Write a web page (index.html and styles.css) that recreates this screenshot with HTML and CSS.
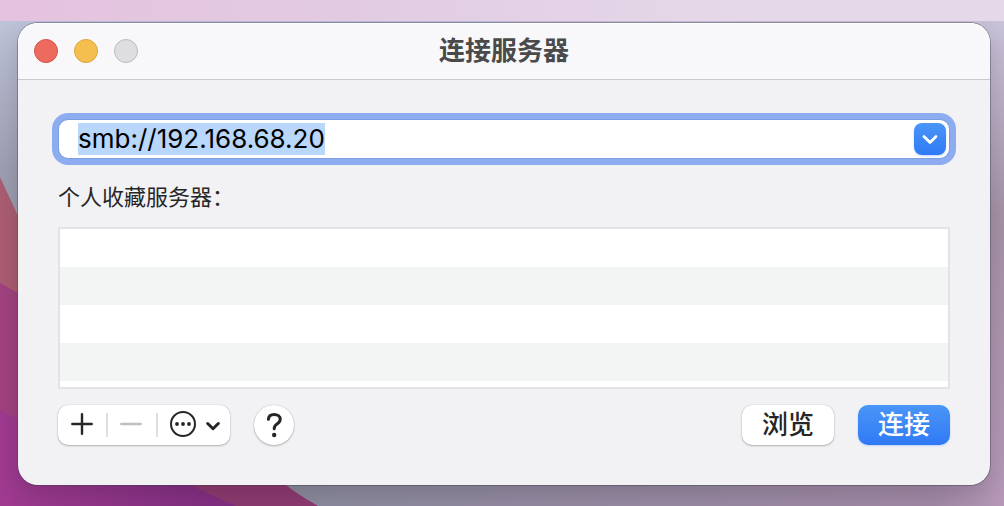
FILE: index.html
```html
<!DOCTYPE html>
<html lang="zh-CN">
<head>
<meta charset="utf-8">
<meta name="viewport" content="width=device-width, initial-scale=1">
<title>连接服务器</title>
<link rel="stylesheet" href="styles.css">
</head>
<body>
<div class="menu-strip"></div>
<div class="desktop">
  <svg class="wallpaper" viewBox="0 0 1004 485" preserveAspectRatio="none" aria-hidden="true">
    <defs>
      <linearGradient id="sky" x1="0" y1="0" x2="0" y2="1">
        <stop offset="0" stop-color="#bfc3d9"/>
        <stop offset="0.3" stop-color="#9d9fb2"/>
        <stop offset="1" stop-color="#85869a"/>
      </linearGradient>
      <linearGradient id="dusk" x1="0" y1="0" x2="0" y2="1">
        <stop offset="0" stop-color="#c9c3da"/>
        <stop offset="0.4" stop-color="#a592a6"/>
        <stop offset="1" stop-color="#b698b8"/>
      </linearGradient>
      <linearGradient id="floor" x1="0" y1="0" x2="1" y2="0">
        <stop offset="0" stop-color="#8a8a9d"/>
        <stop offset="0.9" stop-color="#a189a6"/>
        <stop offset="1" stop-color="#b698b8"/>
      </linearGradient>
      <linearGradient id="violet" x1="0" y1="0" x2="1" y2="0">
        <stop offset="0" stop-color="#9f3a90"/>
        <stop offset="1" stop-color="#7e2e80"/>
      </linearGradient>
    </defs>
    <path fill="url(#sky)" d="M0 0h500v485H0z"/>
    <path fill="url(#dusk)" d="M500 0h504v485H500z"/>
    <path fill="url(#floor)" d="M280 450h724v35H280z"/>
    <path fill="#ab5d72" d="M0 156L18 195V300H0z"/>
    <path fill="#a0427f" d="M0 262L18 272L150 360L270 450Q292 471 318 485H0z"/>
    <path fill="#8d3a70" d="M100 455H274Q292 471 318 485H100z"/>
    <path fill="url(#violet)" d="M0 389L18 398L190 464L236 485H0z"/>
  </svg>
  <main class="window">
    <header class="titlebar">
      <div class="lights">
        <button class="light close" type="button" aria-label="关闭"></button>
        <button class="light minimize" type="button" aria-label="最小化"></button>
        <button class="light zoom" type="button" aria-label="缩放" disabled></button>
      </div>
      <h1 class="title">连接服务器</h1>
    </header>
    <form class="content">
      <div class="combo">
        <input class="address" id="address" type="text" value="smb://192.168.68.20" aria-label="服务器地址" spellcheck="false" autocomplete="off">
        <button class="combo-arrow" type="button" aria-label="最近使用的服务器">
          <svg width="32" height="32" viewBox="0 0 32 32"><path d="M10 13.5L16 19.5L22 13.5"/></svg>
        </button>
      </div>
      <h2 class="label" id="favorites-label">个人收藏服务器：</h2>
      <div class="favorites" role="listbox" aria-labelledby="favorites-label"></div>
      <div class="actions">
        <div class="segments">
          <button class="segment add" type="button" aria-label="添加">
            <svg width="22" height="22" viewBox="0 0 22 22"><path d="M11 1.3V20.7M1.3 11H20.7"/></svg>
          </button>
          <button class="segment" type="button" aria-label="移除" disabled>
            <svg width="22" height="22" viewBox="0 0 22 22"><path d="M1.3 11H20.7"/></svg>
          </button>
          <button class="segment more" type="button" aria-label="更多">
            <svg width="26" height="26" viewBox="0 0 26 26"><circle cx="13" cy="13" r="12"/><g class="dots"><circle cx="7" cy="13" r="1.9"/><circle cx="13" cy="13" r="1.9"/><circle cx="19" cy="13" r="1.9"/></g></svg>
            <svg class="chevron" width="14" height="26" viewBox="0 0 14 26"><path d="M1.7 12.5L7 17.7L12.3 12.5"/></svg>
          </button>
        </div>
        <button class="help" type="button" aria-label="帮助">
          <svg width="16" height="26" viewBox="0 0 16 26"><path d="M2.4 7.3C2.6 4.2 4.9 2.5 8.2 2.5S14.2 4.4 14.2 7.2C14.2 9.8 12.7 10.9 11 12C9.2 13.2 8.2 14.2 8.2 16.8"/><circle cx="8.2" cy="23" r="2.2"/></svg>
        </button>
        <button class="push browse" type="button">浏览</button>
        <button class="push primary" type="submit">连接</button>
      </div>
    </form>
  </main>
</div>
<script src="script.js"></script>
</body>
</html>
```
FILE: styles.css
```css
* {
  box-sizing: border-box;
}

body {
  margin: 0;
  min-height: 100vh;
  display: flex;
  flex-direction: column;
  font-family: Inter, "Noto Sans CJK SC", sans-serif;
  color: #262626;
}

button {
  margin: 0;
  padding: 0;
  border: 0;
  font: inherit;
  color: inherit;
  background: none;
}

svg {
  display: block;
  fill: none;
  stroke-linecap: round;
  stroke-linejoin: round;
}

.menu-strip {
  height: 21px;
  background: linear-gradient(90deg, #e5c2df, #e2cbe2 35%, #e5d8e9 75%);
}

.desktop {
  position: relative;
  flex: 1;
  display: flex;
  padding: 2px 14px 21px 18px;
  overflow: hidden;
}

.wallpaper {
  position: absolute;
  inset: 0;
  width: 100%;
  height: 100%;
}

.window {
  position: relative;
  flex: 1;
  display: flex;
  flex-direction: column;
  border-radius: 20px;
  background: #f2f2f5;
  box-shadow: 0 0 0 1px rgba(60, 60, 80, 0.4), 0 8px 24px rgba(0, 0, 0, 0.16);
}

.titlebar {
  display: grid;
  grid-template-columns: 1fr auto 1fr;
  align-items: center;
  height: 57px;
  padding: 0 16px;
  border-bottom: 1px solid #cbcbce;
  border-radius: 20px 20px 0 0;
  background: #f8f8fb;
  box-shadow: inset 0 1px 0 #fff;
}

.lights {
  display: flex;
  gap: 16px;
}

.light {
  width: 24px;
  height: 24px;
  border: 1px solid;
  border-radius: 50%;
}

.close {
  background: #ed6a5f;
  border-color: #d8524a;
}

.minimize {
  background: #f5bf50;
  border-color: #dba53b;
}

.zoom {
  background: #dedee0;
  border-color: #bcbcbe;
}

.title {
  margin: 0;
  font-size: 26px;
  line-height: 32px;
  font-weight: 700;
  color: #4a4a4a;
}

.content {
  flex: 1;
  display: flex;
  flex-direction: column;
  padding: 40px;
}

.combo {
  display: flex;
  align-items: center;
  height: 38px;
  margin: 0 1px;
  padding: 0 3px 0 19px;
  border-radius: 9px;
  background: #fff;
  box-shadow: 0 0 0 1px #7c9ee2, 0 0 0 7px #8dadf0;
}

.address {
  flex: 1;
  min-width: 0;
  height: 32px;
  padding: 0;
  border: 0;
  outline: 0;
  background: none;
  font: 26px/32px Inter, "Noto Sans CJK SC", sans-serif;
  color: #000;
}

.address::selection {
  background: #b9d6fb;
  color: #000;
}

.combo-arrow {
  border-radius: 8px;
  background: linear-gradient(#4a95f7, #2f7af5);
  box-shadow: 0 1px 2px rgba(40, 110, 240, 0.3);
  stroke: #fff;
  stroke-width: 2.8;
}

.label {
  margin: 23px 0 14px;
  font-size: 22px;
  line-height: 32px;
  font-weight: 400;
}

.favorites {
  flex: 1;
  min-height: 161px;
  border: 2px solid #e3e3e5;
  background: repeating-linear-gradient(#fff 0 38px, #f3f5f5 38px 76px);
}

.actions {
  display: flex;
  align-items: center;
  margin-top: 16px;
}

.segments,
.help,
.browse {
  background: #fff;
  box-shadow: 0 0 1px rgba(0, 0, 0, 0.3), 0 1px 2px rgba(0, 0, 0, 0.25);
}

.segments {
  display: flex;
  height: 40px;
  border-radius: 10px;
}

.segment {
  display: flex;
  align-items: center;
  justify-content: center;
  width: 50px;
  padding-bottom: 2px;
  stroke: #262626;
  stroke-width: 2.4;
}

.add {
  width: 48px;
}

.segment:disabled {
  stroke: #bfbfbf;
}

.segment + .segment {
  background: linear-gradient(#dfdfdf, #dfdfdf) left / 2px 24px no-repeat;
}

.more {
  gap: 10px;
  width: 74px;
  padding-left: 4px;
  stroke-width: 2;
}

.dots {
  fill: #262626;
  stroke: none;
}

.chevron {
  stroke-width: 3;
}

.help {
  display: flex;
  align-items: center;
  justify-content: center;
  width: 40px;
  height: 40px;
  margin: 0 auto 0 24px;
  border-radius: 50%;
  stroke: #262626;
  stroke-width: 3;
}

.help circle {
  fill: #262626;
  stroke: none;
}

.push {
  width: 92px;
  height: 40px;
  border-radius: 10px;
  font-size: 26px;
  line-height: 40px;
  font-weight: 500;
}

.primary {
  margin-left: 24px;
  background: linear-gradient(#4a95f7, #2f7af5);
  box-shadow: 0 1px 2px rgba(40, 110, 240, 0.25);
  color: #fff;
}
```
FILE: script.js
```js
const address = document.getElementById("address");
address.focus();
address.select();
```
